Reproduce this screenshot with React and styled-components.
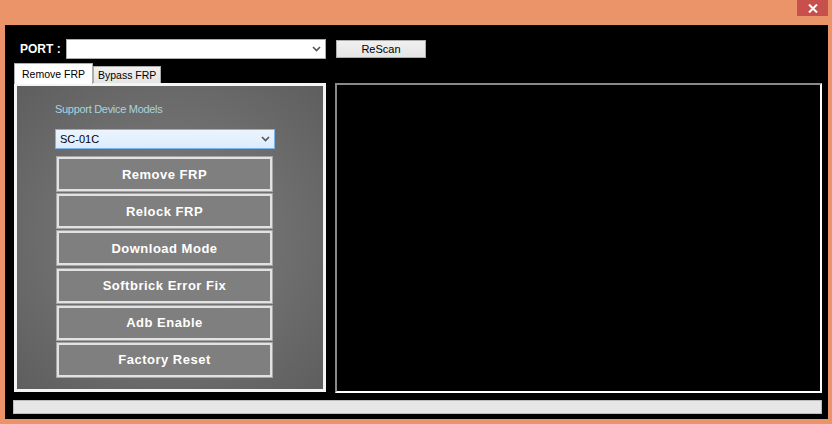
import React from "react";
import styled, { createGlobalStyle } from "styled-components";

const GlobalStyle = createGlobalStyle`
  html, body {
    margin: 0;
    padding: 0;
    background: #eb9369;
  }
  * {
    box-sizing: border-box;
  }
`;

const Window = styled.div`
  width: 832px;
  height: 424px;
  background: #eb9369;
  display: flex;
  flex-direction: column;
  font-family: "Liberation Sans", Arial, sans-serif;
  overflow: hidden;
`;

const TitleBar = styled.div`
  height: 25px;
  display: flex;
  justify-content: flex-end;
  align-items: flex-start;
  padding-right: 4px;
`;

const CloseButton = styled.div`
  width: 31px;
  height: 16px;
  background: #c7504c;
  display: flex;
  align-items: center;
  justify-content: center;
`;

const Client = styled.div`
  margin: 0 4px 0 5px;
  height: 394px;
  background: #000;
  display: flex;
  flex-direction: column;
  padding: 13px 0 0 8px;
`;

const PortRow = styled.div`
  display: flex;
  align-items: center;
  height: 21px;
`;

const PortLabel = styled.span`
  color: #fff;
  font-weight: bold;
  font-size: 12px;
  margin-left: 7px;
  width: 46px;
`;

const Combo = styled.div`
  width: ${(p) => p.$width}px;
  height: 20px;
  border: 1px solid ${(p) => (p.$focused ? "#7eb4ea" : "#acacac")};
  background: ${(p) =>
    p.$focused ? "linear-gradient(#ecf4fc, #dcecfc)" : "#fff"};
  display: flex;
  align-items: center;
  justify-content: space-between;
  padding: 0 4px 0 4px;
  font-size: 11px;
  color: #000;
`;

const RescanButton = styled.div`
  width: 90px;
  height: 18px;
  margin-left: 10px;
  border: 1px solid #acacac;
  background: linear-gradient(#f0f0f0, #e5e5e5);
  font-size: 11px;
  color: #000;
  display: flex;
  align-items: center;
  justify-content: center;
`;

const Main = styled.div`
  display: flex;
  margin-top: 4px;
  margin-left: 1px;
  height: 330px;
`;

const TabColumn = styled.div`
  width: 312px;
  display: flex;
  flex-direction: column;
`;

const TabStrip = styled.div`
  display: flex;
  align-items: flex-end;
  height: 20px;
`;

const Tab = styled.div`
  height: ${(p) => (p.$active ? 21 : 17)}px;
  padding: 0 ${(p) => (p.$active ? 7 : 4)}px;
  margin-bottom: ${(p) => (p.$active ? -1 : 0)}px;
  background: ${(p) => (p.$active ? "#fff" : "linear-gradient(#f0f0f0, #e5e5e5)")};
  border: 1px solid #acacac;
  border-bottom: none;
  font-size: 10.5px;
  color: #000;
  display: flex;
  align-items: center;
  position: relative;
  z-index: ${(p) => (p.$active ? 1 : 0)};
`;

const TabPanel = styled.div`
  width: 312px;
  height: 309px;
  border: 3px solid #f4f4f4;
  background: radial-gradient(ellipse at 50% 50%, #7c7c7c 0%, #6e6e6e 55%, #5e5e5e 100%);
  display: flex;
  flex-direction: column;
  padding: 17px 0 0 38px;
`;

const ModelsLabel = styled.div`
  color: #a9d4df;
  font-size: 11px;
  letter-spacing: -0.3px;
  height: 26px;
`;

const ButtonStack = styled.div`
  display: flex;
  flex-direction: column;
  gap: 1.2px;
  margin-top: 7px;
  margin-left: 1px;
`;

const ActionButton = styled.div`
  width: 217px;
  height: 36px;
  border: 1px solid #a6a6a6;
  box-shadow: inset 0 0 0 2px #e2e2e2;
  background: #7f7f7f;
  color: #fff;
  font-weight: bold;
  font-size: 13px;
  letter-spacing: 0.5px;
  display: flex;
  align-items: center;
  justify-content: center;
`;

const LogPanel = styled.div`
  margin-top: 20px;
  margin-left: 9px;
  width: 487px;
  height: 310px;
  background: #000;
  border-top: 2px solid #8a8a8a;
  border-left: 2px solid #8a8a8a;
  border-right: 2px solid #fff;
  border-bottom: 2px solid #fff;
`;

const ProgressBar = styled.div`
  margin-top: 7px;
  width: 809px;
  height: 14px;
  border: 1px solid #bcbcbc;
  background: #e6e6e6;
`;

const Chevron = () => (
  <svg width="9" height="6" viewBox="0 0 9 6">
    <path d="M1 1 L4.5 4.5 L8 1" fill="none" stroke="#555" strokeWidth="1.6" />
  </svg>
);

const actions = [
  "Remove FRP",
  "Relock FRP",
  "Download Mode",
  "Softbrick Error Fix",
  "Adb Enable",
  "Factory Reset",
];

export default function App() {
  return (
    <Window>
      <GlobalStyle />
      <TitleBar>
        <CloseButton>
          <svg width="10" height="9" viewBox="0 0 10 9">
            <path d="M1 0.5 L9 8.5 M9 0.5 L1 8.5" stroke="#fff" strokeWidth="2" />
          </svg>
        </CloseButton>
      </TitleBar>
      <Client>
        <PortRow>
          <PortLabel>PORT :</PortLabel>
          <Combo $width={260}>
            <span />
            <Chevron />
          </Combo>
          <RescanButton>ReScan</RescanButton>
        </PortRow>
        <Main>
          <TabColumn>
            <TabStrip>
              <Tab $active>Remove FRP</Tab>
              <Tab>Bypass FRP</Tab>
            </TabStrip>
            <TabPanel>
              <ModelsLabel>Support Device Models</ModelsLabel>
              <Combo $width={220} $focused>
                <span>SC-01C</span>
                <Chevron />
              </Combo>
              <ButtonStack>
                {actions.map((a) => (
                  <ActionButton key={a}>{a}</ActionButton>
                ))}
              </ButtonStack>
            </TabPanel>
          </TabColumn>
          <LogPanel />
        </Main>
        <ProgressBar />
      </Client>
    </Window>
  );
}
